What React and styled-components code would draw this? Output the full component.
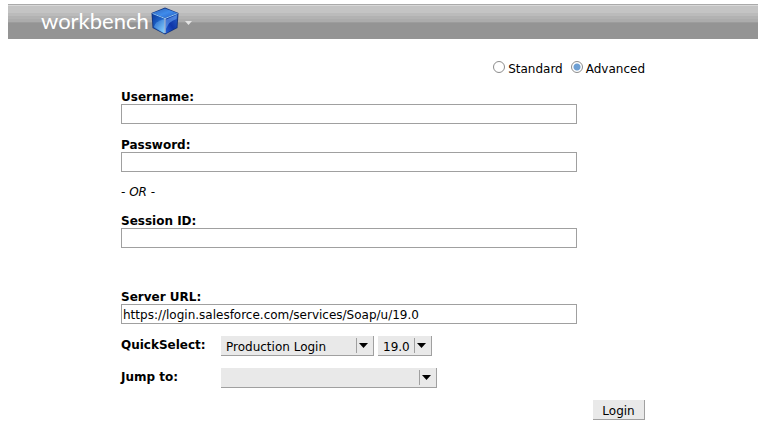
import React, { useState } from "react";
import styled, { createGlobalStyle } from "styled-components";

const GlobalStyle = createGlobalStyle`
  *, *::before, *::after { box-sizing: border-box; }
  body {
    margin: 0;
    background: #fff;
    color: #000;
    font: 12px/16px "DejaVu Sans", Verdana, sans-serif;
  }
  input, select, button { font: inherit; color: inherit; margin: 0; border-radius: 0; }
`;

const Page = styled.div`
  padding: 4px 11px 8px 8px;
`;

const Header = styled.header`
  display: flex;
  align-items: center;
  height: 35px;
  padding: 0 0 2px 33px;
  background: linear-gradient(
    #aaa 1px, #d8d8d8 1px 2px, #c4c4c4 2px 9px, #bbb 9px 12px,
    #b2b2b2 12px 15px, #acacac 15px 18px, #9c9c9c 18px 19px, #949494 19px
  );
`;

const MenuButton = styled.button`
  display: flex;
  align-items: center;
  padding: 0;
  border: 0;
  background: none;
  cursor: pointer;
`;

const Wordmark = styled.span`
  color: #fff;
  font: 400 22px/32px Lato, sans-serif;
`;

const CubeSvg = styled.svg`
  width: 28px;
  height: 28px;
  margin: 0 6px 0 2px;
`;

const CaretSvg = styled.svg`
  width: 7px;
  height: 4px;
  margin-top: 4px;
`;

const Form = styled.form`
  display: flex;
  flex-direction: column;
  max-width: 524px;
  margin: 20px auto 0;
`;

const ModeGroup = styled.div`
  display: flex;
  justify-content: flex-end;
  gap: 8px;
  padding-top: 2px;
  margin-bottom: 10px;
`;

const ModeLabel = styled.label`
  display: flex;
  align-items: center;
  gap: 3px;
  line-height: 17px;
`;

const Radio = styled.input`
  appearance: none;
  width: 12px;
  height: 12px;
  margin-bottom: 5px;
  border: 1px solid #8c8c8c;
  border-radius: 50%;
  background: #fff;
  &:checked { background: radial-gradient(circle, #6d9fd3 3px, #fff 4px); }
`;

const Field = styled.div`
  display: flex;
  flex-direction: column;
  margin-bottom: ${({ $gap }) => $gap || 12}px;
`;

const Label = styled.label`
  padding-top: 2px;
  font-weight: bold;
  line-height: 14px;
`;

const TextInput = styled.input`
  width: 456px;
  max-width: 100%;
  height: 20px;
  padding: 1px 1px 0;
  border: 1px solid #a0a0a0;
  background: #fff;
`;

const Divider = styled.p`
  margin: 0 0 12px;
  font-style: italic;
`;

const Row = styled.div`
  display: grid;
  grid-template-columns: 100px 1fr;
  margin-bottom: 12px;
`;

const SelectGroup = styled.div`
  display: flex;
  gap: 4px;
`;

const SelectBox = styled.span`
  position: relative;
  width: ${({ $width }) => $width}px;
`;

const Select = styled.select`
  appearance: none;
  display: block;
  width: 100%;
  height: 20px;
  padding: 2px 18px 0 5px;
  border: solid #a0a0a0;
  border-width: 0 1px 1px 0;
  background: #e9e9e9;
`;

const SelectMark = styled.span`
  position: absolute;
  top: 2px;
  right: 1px;
  display: flex;
  width: 17px;
  height: 15px;
  padding: 5px 0 0 2px;
  border-left: 1px solid #a0a0a0;
  pointer-events: none;
`;

const LoginButton = styled.button`
  align-self: flex-end;
  width: 52px;
  height: 20px;
  padding: 2px 0 0;
  border: solid #a0a0a0;
  border-width: 0 1px 1px 0;
  background: #e9e9e9;
`;

function Cube() {
  return (
    <CubeSvg viewBox="0 0 28 28" aria-hidden="true">
      <defs>
        <linearGradient id="top" x1="0" y1="0" x2="1" y2="1">
          <stop offset="0" stopColor="#2d62b8" />
          <stop offset=".5" stopColor="#3f8bea" />
          <stop offset="1" stopColor="#2460c8" />
        </linearGradient>
        <linearGradient id="left" x1="0" y1="0" x2=".8" y2="1">
          <stop offset="0" stopColor="#0c3a9c" />
          <stop offset=".5" stopColor="#1d62c8" />
          <stop offset="1" stopColor="#7cc8fa" />
        </linearGradient>
        <linearGradient id="right" x1="0" y1="1" x2="1" y2="0">
          <stop offset="0" stopColor="#2462d8" />
          <stop offset=".45" stopColor="#0f35a8" />
          <stop offset="1" stopColor="#2a62c8" />
        </linearGradient>
      </defs>
      <path d="M14 .5 27.5 6 26.500 21 14 27.500 1.500 21 .5 6Z" fill="#133580" />
      <path d="M14 1.500 26.500 6 14 11 1.500 6Z" fill="url(#top)" />
      <path d="M1.500 7 13.500 12V26.500L2.500 20.500Z" fill="url(#left)" />
      <path d="M26.500 7 14.500 12V26.500L25.500 20.500Z" fill="url(#right)" />
      <path d="M3 20Q4 14 13 12.500V25.500Z" fill="#8bd0ff" opacity=".35" />
      <path d="M15 12.500 26 8 25.500 12Q18 14 15 22Z" fill="#75b5ff" opacity=".5" />
      <path d="M1.500 6.500 14 11.500 26.500 6.500" fill="none" stroke="#8cc4f8" strokeWidth="1" />
      <path d="M14 11.500V26" fill="none" stroke="#e4f5ff" strokeWidth="1" />
    </CubeSvg>
  );
}

function Dropdown({ width, children, ...rest }) {
  return (
    <SelectBox $width={width}>
      <Select {...rest}>{children}</Select>
      <SelectMark>
        <svg width="9" height="5" viewBox="0 0 9 5" aria-hidden="true">
          <path d="M0 0H9L4.5 5Z" fill="#000" />
        </svg>
      </SelectMark>
    </SelectBox>
  );
}

export default function App() {
  const [mode, setMode] = useState("Advanced");
  return (
    <>
      <GlobalStyle />
      <Page>
        <Header>
          <MenuButton type="button">
            <Wordmark>workbench</Wordmark>
            <Cube />
            <CaretSvg viewBox="0 0 7 4" aria-hidden="true">
              <path d="M0 0H7L3.5 4Z" fill="#e4e4e4" />
            </CaretSvg>
          </MenuButton>
        </Header>
        <Form onSubmit={(event) => event.preventDefault()}>
          <ModeGroup role="radiogroup" aria-label="Login type">
            {["Standard", "Advanced"].map((name) => (
              <ModeLabel key={name}>
                <Radio type="radio" name="mode" checked={mode === name} onChange={() => setMode(name)} />
                {name}
              </ModeLabel>
            ))}
          </ModeGroup>
          <Field>
            <Label htmlFor="username">Username:</Label>
            <TextInput id="username" type="text" />
          </Field>
          <Field>
            <Label htmlFor="password">Password:</Label>
            <TextInput id="password" type="password" />
          </Field>
          <Divider>- OR -</Divider>
          <Field $gap={40}>
            <Label htmlFor="session">Session ID:</Label>
            <TextInput id="session" type="text" />
          </Field>
          <Field>
            <Label htmlFor="server">Server URL:</Label>
            <TextInput id="server" type="text" defaultValue="https://login.salesforce.com/services/Soap/u/19.0" />
          </Field>
          <Row>
            <Label htmlFor="quick">QuickSelect:</Label>
            <SelectGroup>
              <Dropdown id="quick" width={153}>
                <option>Production Login</option>
              </Dropdown>
              <Dropdown width={54} aria-label="API version">
                <option>19.0</option>
              </Dropdown>
            </SelectGroup>
          </Row>
          <Row>
            <Label htmlFor="jump">Jump to:</Label>
            <Dropdown id="jump" width={216}>
              <option></option>
            </Dropdown>
          </Row>
          <LoginButton type="submit">Login</LoginButton>
        </Form>
      </Page>
    </>
  );
}
